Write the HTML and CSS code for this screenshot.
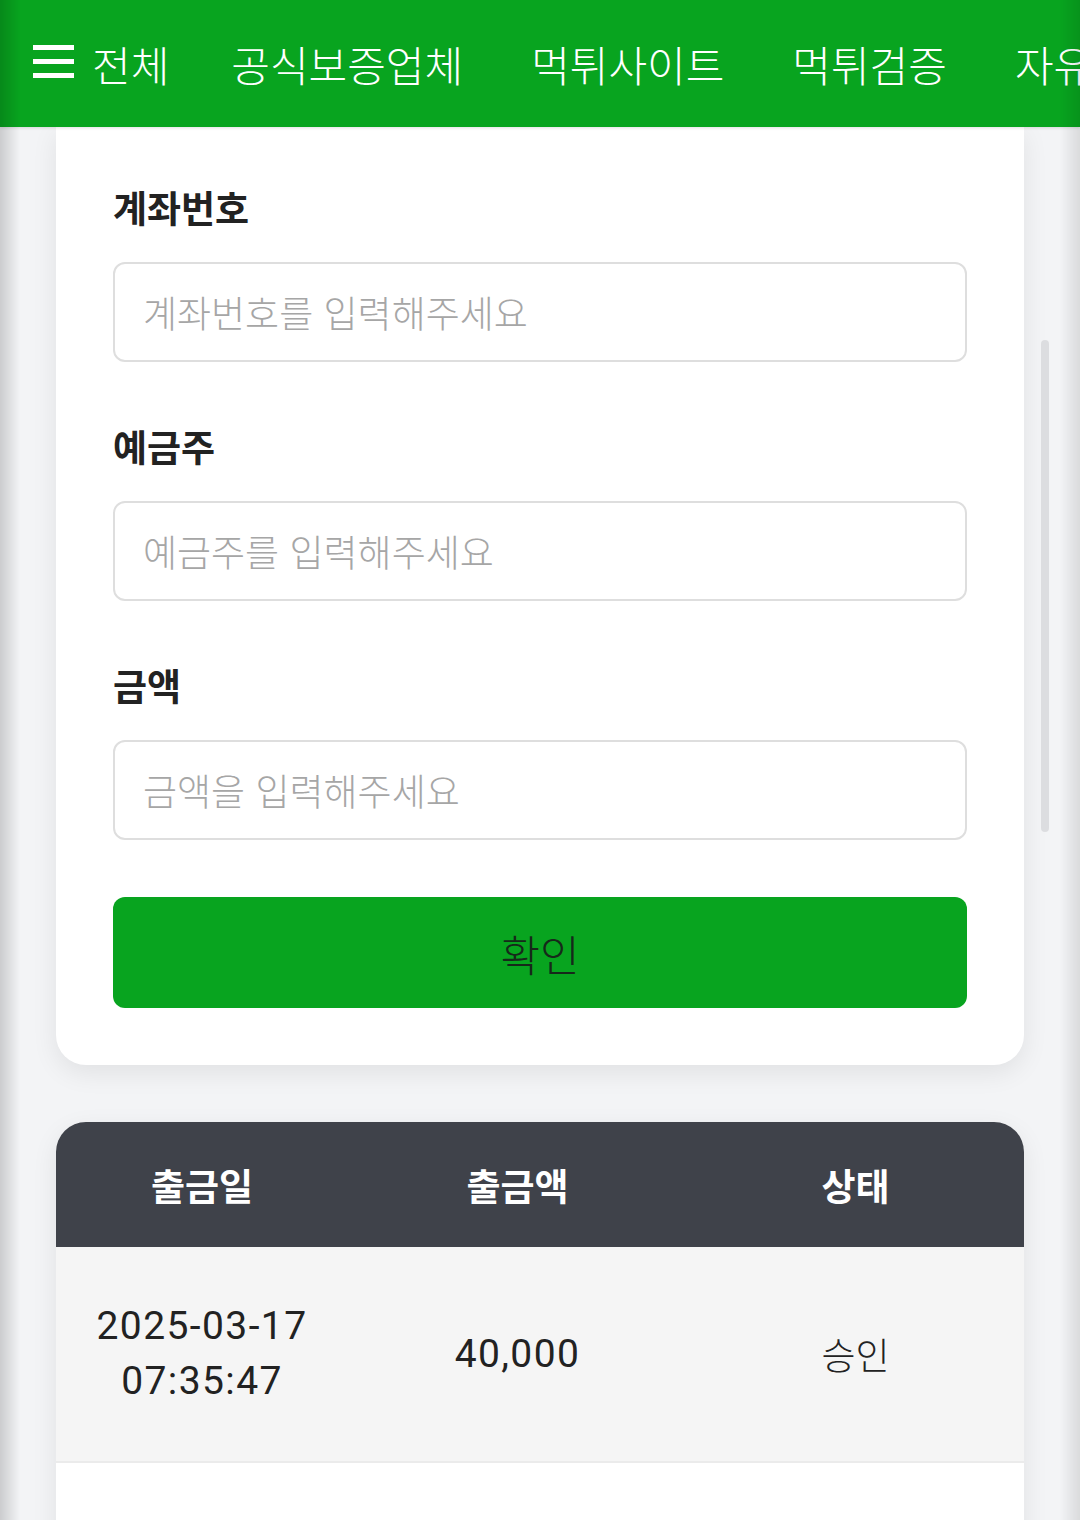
FILE: index.html
```html
<!DOCTYPE html>
<html lang="ko">
<head>
  <meta charset="UTF-8">
  <meta name="viewport" content="width=device-width, initial-scale=1.0">
  <title>출금신청</title>
  <link rel="stylesheet" href="styles.css">
</head>
<body>
  <header class="top-nav">
    <a href="#" class="nav-item nav-all">
      <span class="burger"><span></span><span></span><span></span></span>
      전체
    </a>
    <a href="#" class="nav-item">공식보증업체</a>
    <a href="#" class="nav-item">먹튀사이트</a>
    <a href="#" class="nav-item">먹튀검증</a>
    <a href="#" class="nav-item">자유게시판</a>
  </header>

  <main class="content">
    <form class="withdraw-card" onsubmit="return false;">
      <label class="form-label" for="account">계좌번호</label>
      <input class="form-input" id="account" type="text" placeholder="계좌번호를 입력해주세요">

      <label class="form-label" for="holder">예금주</label>
      <input class="form-input" id="holder" type="text" placeholder="예금주를 입력해주세요">

      <label class="form-label" for="amount">금액</label>
      <input class="form-input" id="amount" type="text" placeholder="금액을 입력해주세요">

      <button type="submit" class="submit-btn">확인</button>
    </form>

    <section class="history">
      <div class="history-head">
        <div>출금일</div>
        <div>출금액</div>
        <div>상태</div>
      </div>
      <div class="history-row">
        <div class="num">2025-03-17<br>07:35:47</div>
        <div class="num">40,000</div>
        <div>승인</div>
      </div>
    </section>
  </main>

  <div class="scroll-thumb"></div>
</body>
</html>
```

FILE: styles.css
```css
* {
  margin: 0;
  padding: 0;
  box-sizing: border-box;
}

html {
  overflow: hidden;
}

body {
  font-family: "Noto Sans CJK KR", "Noto Sans", sans-serif;
  background: #f3f4f6;
  color: #222;
  min-height: 100vh;
}

/* 화면 가장자리 그림자 */
body::before,
body::after {
  content: "";
  position: fixed;
  top: 0;
  bottom: 0;
  width: 20px;
  z-index: 20;
  pointer-events: none;
}

body::before {
  left: 0;
  background: linear-gradient(to right, rgba(0, 0, 0, 0.16), rgba(0, 0, 0, 0));
}

body::after {
  right: 0;
  background: linear-gradient(to left, rgba(0, 0, 0, 0.1), rgba(0, 0, 0, 0));
}

.top-nav {
  position: relative;
  z-index: 10;
  height: 127px;
  background: #08a41f;
  display: flex;
  align-items: center;
  gap: 68px;
  padding-left: 33px;
  white-space: nowrap;
  overflow: hidden;
  box-shadow: 0 1px 3px rgba(0, 0, 0, 0.12);
}

.nav-item {
  color: #fff;
  text-decoration: none;
  font-size: 42px;
  font-weight: 300;
  line-height: 1;
  flex-shrink: 0;
}

.nav-all {
  display: flex;
  align-items: center;
  margin-right: -6px;
}

.burger {
  width: 41px;
  height: 33px;
  display: flex;
  flex-direction: column;
  justify-content: space-between;
  margin-right: 18px;
  margin-top: -4px;
}

.burger span {
  display: block;
  height: 5px;
  background: #fff;
}

.content {
  padding: 0 56px;
}

.withdraw-card {
  background: #fff;
  border-radius: 0 0 30px 30px;
  padding: 53px 57px 57px;
  box-shadow: 0 8px 26px rgba(0, 0, 0, 0.08);
}

.form-label {
  display: block;
  font-size: 37px;
  font-weight: 700;
  line-height: 54px;
  margin-bottom: 28px;
  color: #222;
}

.form-input {
  display: block;
  width: 100%;
  height: 100px;
  border: 2px solid #dedede;
  border-radius: 12px;
  padding: 0 28px;
  font-family: inherit;
  font-size: 37px;
  font-weight: 300;
  color: #222;
  margin-bottom: 57px;
  outline: none;
}

.form-input::placeholder {
  color: #a6a6a6;
}

.submit-btn {
  display: block;
  width: 100%;
  height: 111px;
  border: none;
  border-radius: 12px;
  background: #08a41f;
  color: #16291a;
  font-family: inherit;
  font-size: 43px;
  font-weight: 300;
  cursor: pointer;
}

.history {
  margin-top: 57px;
  background: #fff;
  border-radius: 30px 30px 0 0;
  overflow: hidden;
  padding-bottom: 200px;
  box-shadow: 0 8px 26px rgba(0, 0, 0, 0.08);
}

.history-head,
.history-row {
  display: grid;
  grid-template-columns: 292px 339px 1fr;
  align-items: center;
  text-align: center;
}

.history-head {
  height: 125px;
  background: #3f424a;
  color: #fff;
  font-size: 37px;
  font-weight: 700;
}

.history-row {
  background: #f5f5f5;
  padding: 52px 0;
  border-bottom: 2px solid #ebebeb;
  font-size: 37px;
  font-weight: 300;
  line-height: 55px;
  color: #222;
}

.history-row .num {
  font-family: Roboto, "Noto Sans CJK KR", sans-serif;
  font-size: 39px;
  font-weight: 400;
  letter-spacing: 1.4px;
}

.scroll-thumb {
  position: fixed;
  left: 1041px;
  top: 340px;
  width: 8px;
  height: 492px;
  border-radius: 4px;
  background: #dcdde0;
  z-index: 15;
}
```
